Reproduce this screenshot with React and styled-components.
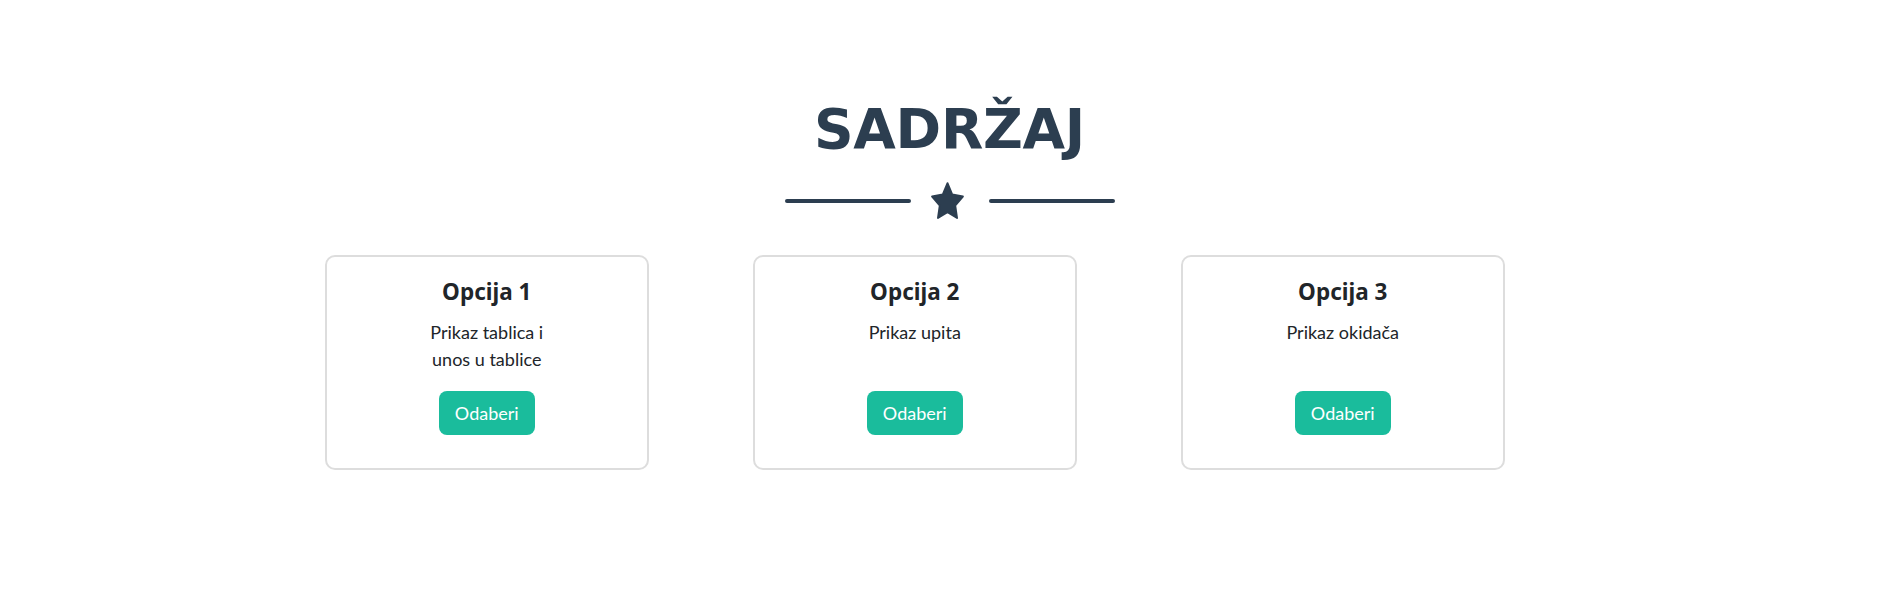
import React from "react";
import styled, { createGlobalStyle } from "styled-components";

const GlobalStyle = createGlobalStyle`
  html, body { margin: 0; padding: 0; background: #fff; }
  body { font-family: Lato, "Open Sans", sans-serif; color: #212529; }
  * { box-sizing: border-box; }
`;

const Section = styled.section`
  display: flex;
  flex-direction: column;
  align-items: center;
  padding-top: 96px;
`;

const Heading = styled.h2`
  margin: 0;
  padding-left: 10px;
  font-family: "DejaVu Sans", "Noto Sans", sans-serif;
  font-weight: 700;
  font-size: 55px;
  line-height: 66px;
  letter-spacing: -0.3px;
  text-transform: uppercase;
  color: #2c3e50;
`;

const Divider = styled.div`
  display: flex;
  align-items: center;
  margin-top: 20px;
  padding-left: 10px;
`;

const DividerLine = styled.span`
  display: block;
  width: 126px;
  height: 4px;
  border-radius: 2px;
  background: #2c3e50;
`;

const StarIcon = styled.svg`
  display: block;
  width: 33px;
  height: 37px;
  margin: ${(p) => p.$margin};
`;

const Cards = styled.div`
  display: flex;
  justify-content: center;
  gap: 104.5px;
  margin-top: 36px;
  padding-right: 59.5px;
`;

const Card = styled.div`
  width: 323.5px;
  display: flex;
  flex-direction: column;
  align-items: center;
  border: 2px solid #dddddd;
  border-radius: 10px;
  padding: 22px 16px 33px;
  text-align: center;
`;

const CardTitle = styled.h4`
  margin: 0;
  font-family: "Noto Sans", "DejaVu Sans", sans-serif;
  font-weight: 700;
  font-size: 22.5px;
  line-height: 26.4px;
  color: #212529;
`;

const CardText = styled.p`
  margin: 14px 0 0;
  max-width: 140px;
  font-size: 18px;
  line-height: 27px;
  color: #212529;
`;

const ButtonWrap = styled.div`
  margin-top: auto;
  padding-top: 18px;
`;

const SelectButton = styled.button`
  border: none;
  border-radius: 8px;
  background: #1abc9c;
  color: #fff;
  font-family: Lato, sans-serif;
  font-size: 18px;
  line-height: 27px;
  padding: 8.5px 16px;
  cursor: pointer;
`;

function Star({ margin }) {
  const pts = [];
  for (let i = 0; i < 10; i++) {
    const r = i % 2 === 0 ? 1 : 0.5;
    const a = (-90 + i * 36) * (Math.PI / 180);
    pts.push(`${(r * Math.cos(a)).toFixed(3)},${(r * Math.sin(a)).toFixed(3)}`);
  }
  return (
    <StarIcon $margin={margin} viewBox="-1.02 -1.07 2.04 1.94" preserveAspectRatio="none">
      <polygon
        points={pts.join(" ")}
        fill="#2c3e50"
        stroke="#2c3e50"
        strokeWidth="0.12"
        strokeLinejoin="round"
      />
    </StarIcon>
  );
}

const options = [
  { title: "Opcija 1", text: "Prikaz tablica i unos u tablice" },
  { title: "Opcija 2", text: "Prikaz upita" },
  { title: "Opcija 3", text: "Prikaz okidača" },
];

export default function App() {
  return (
    <>
      <GlobalStyle />
      <Section>
        <Heading>Sadržaj</Heading>
        <Divider>
          <DividerLine />
          <Star margin="0 25px 0 20px" />
          <DividerLine />
        </Divider>
        <Cards>
          {options.map((o) => (
            <Card key={o.title}>
              <CardTitle>{o.title}</CardTitle>
              <CardText>{o.text}</CardText>
              <ButtonWrap>
                <SelectButton type="button">Odaberi</SelectButton>
              </ButtonWrap>
            </Card>
          ))}
        </Cards>
      </Section>
    </>
  );
}
